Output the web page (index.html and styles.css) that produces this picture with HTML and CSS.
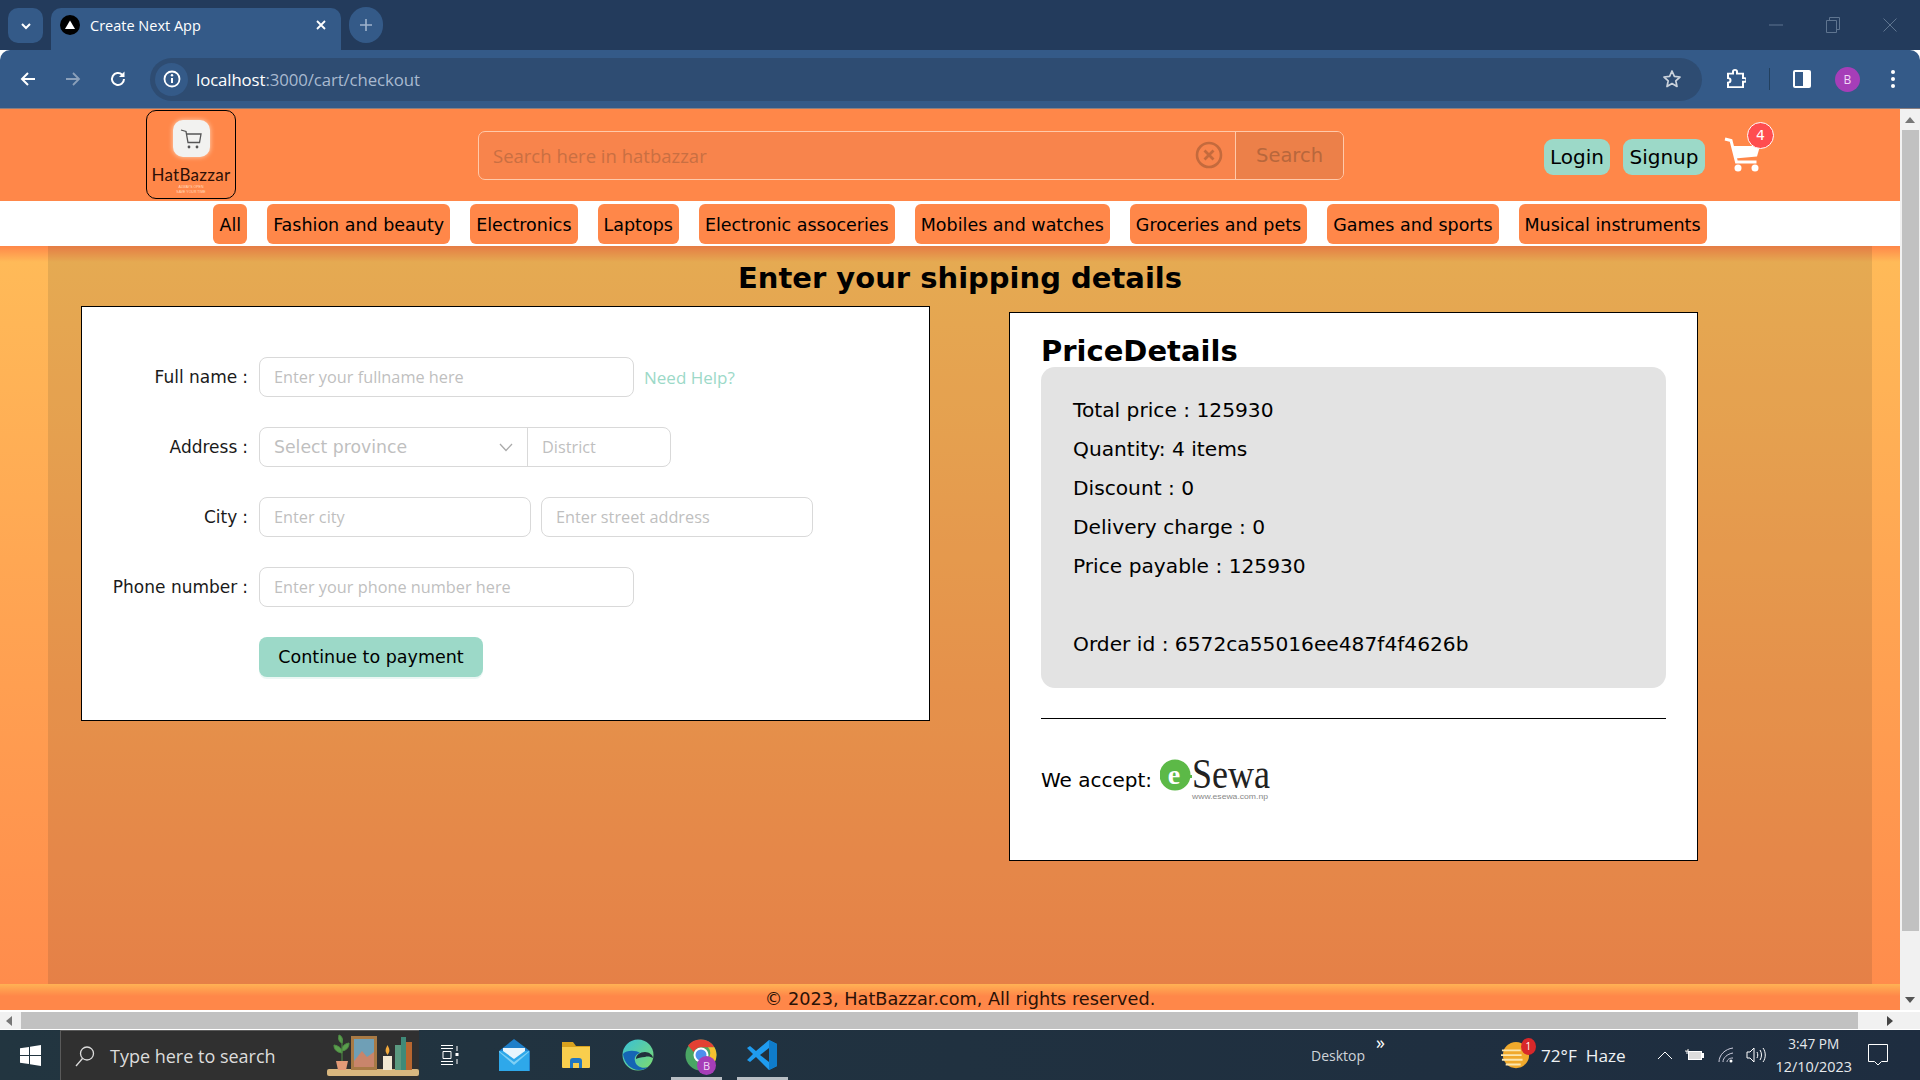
FILE: index.html
```html
<!DOCTYPE html>
<html lang="en">
<head>
<meta charset="utf-8">
<title>Create Next App</title>
<link rel="stylesheet" href="styles.css">
</head>
<body>
<div class="tabstrip">
  <button class="tab-list"><svg width="12" height="12" viewBox="0 0 12 12"><path d="M2 4l4 4 4-4" fill="none" stroke="#fff" stroke-width="2"/></svg></button>
  <div class="tab">
    <svg class="favicon" width="20" height="20" viewBox="0 0 20 20"><circle cx="10" cy="10" r="10" fill="#000"/><path d="M10 5.500l5 8.500H5z" fill="#fff"/></svg>
    <span class="tab-title">Create Next App</span>
    <svg class="tab-close" width="12" height="12" viewBox="0 0 12 12"><path d="M2 2l8 8M10 2l-8 8" stroke="#fff" stroke-width="1.800"/></svg>
  </div>
  <button class="tab-new"><svg width="14" height="14" viewBox="0 0 14 14"><path d="M7 1v12M1 7h12" stroke="#9fb3cc" stroke-width="1.600"/></svg></button>
  <div class="win-controls">
    <svg width="14" height="14" viewBox="0 0 14 14"><path d="M0 7h14" stroke="#5f7590" stroke-width="1"/></svg>
    <svg width="14" height="16" viewBox="0 0 14 16"><path d="M.5 3.500h10v12H.5zM3.500 3.500V.5h10v12h-3" fill="none" stroke="#5f7590"/></svg>
    <svg width="14" height="14" viewBox="0 0 14 14"><path d="M.5.5l13 13M13.500.5l-13 13" stroke="#5f7590"/></svg>
  </div>
</div>
<div class="toolbar">
  <svg class="tb-icon" width="18" height="18" viewBox="0 0 18 18"><path d="M16 9H3M9 3L3 9l6 6" fill="none" stroke="#fff" stroke-width="2"/></svg>
  <svg class="tb-icon fwd" width="18" height="18" viewBox="0 0 18 18"><path d="M2 9h13M9 3l6 6-6 6" fill="none" stroke="#8ba0ba" stroke-width="1.800"/></svg>
  <svg class="tb-icon reload" width="18" height="18" viewBox="0 0 18 18"><path d="M15 9a6 6 0 1 1-1.800-4.300" fill="none" stroke="#fff" stroke-width="2"/><path d="M15.500 1.500v5.500H10z" fill="#fff"/></svg>
  <div class="omnibox">
    <span class="site-info"><svg width="18" height="18" viewBox="0 0 18 18"><circle cx="9" cy="9" r="7.500" fill="none" stroke="#fff" stroke-width="1.800"/><path d="M9 8v5" stroke="#fff" stroke-width="2"/><circle cx="9" cy="5.300" r="1.200" fill="#fff"/></svg></span>
    <span class="url"><b>localhost</b>:3000/cart/checkout</span>
    <svg class="star" width="20" height="20" viewBox="0 0 20 20"><path d="M10 2l2.400 5.400 5.600.6-4.200 3.800 1.200 5.700L10 14.600l-5 2.900 1.200-5.700L2 8l5.600-.6z" fill="none" stroke="#fff" stroke-width="1.700" stroke-linejoin="round"/></svg>
  </div>
  <svg class="ext" width="20" height="20" viewBox="0 0 20 22" preserveAspectRatio="none"><path d="M2 5h5V3a2 2 0 0 1 4 0v2h6v5h1.500a2 2 0 0 1 0 4H17v6H2v-5a2.500 2.500 0 0 0 0-5z" fill="none" stroke="#fff" stroke-width="2"/></svg>
  <span class="tb-sep"></span>
  <svg class="sidepanel" width="18" height="18" viewBox="0 0 18 18"><rect width="18" height="18" rx="2" fill="#fff"/><rect x="2" y="2" width="8" height="14" fill="#345a88"/></svg>
  <span class="avatar">B</span>
  <svg class="menu" width="6" height="18" viewBox="0 0 6 18"><circle cx="3" cy="2" r="2" fill="#fff"/><circle cx="3" cy="9" r="2" fill="#fff"/><circle cx="3" cy="16" r="2" fill="#fff"/></svg>
</div>

<div class="viewport">
  <div class="clip">
    <div class="page">
      <header class="site-header">
        <div class="logo">
          <div class="logo-tile">
            <svg width="24" height="24" viewBox="0 0 24 24"><path d="M2 3l5 1.500 2 11h11.500L22 7H7.500" fill="none" stroke="#555" stroke-width="1.300"/><circle cx="10" cy="20" r="1.400" fill="#555"/><circle cx="18" cy="20" r="1.400" fill="#555"/></svg>
          </div>
          <div class="logo-name">HatBazzar</div>
          <div class="logo-tag">ALWAYS OPEN<br>SAVE YOUR TIME</div>
        </div>
        <div class="search">
          <input class="search-input" type="text" placeholder="Search here in hatbazzar">
          <svg class="search-clear" width="28" height="28" viewBox="0 0 28 28"><circle cx="14" cy="14" r="12" fill="none" stroke="#c46a3d" stroke-width="2.600"/><path d="M9.500 9.500l9 9M18.500 9.500l-9 9" stroke="#c46a3d" stroke-width="2.800"/></svg>
          <span class="search-btn">Search</span>
        </div>
        <a class="auth login">Login</a>
        <a class="auth signup">Signup</a>
        <div class="cart">
          <svg width="38" height="36" viewBox="0 0 38 36"><path d="M1 2l6 1.500L12.500 25h20" fill="none" stroke="#fff" stroke-width="3"/><path d="M8 9h28l-3 10.500-22 2z" fill="#fff"/><circle cx="14" cy="31" r="3.500" fill="#fff"/><circle cx="31" cy="31" r="3.500" fill="#fff"/></svg>
          <span class="cart-badge">4</span>
        </div>
      </header>
      <nav class="catnav">
        <a>All</a><a>Fashion and beauty</a><a>Electronics</a><a>Laptops</a><a>Electronic assoceries</a><a>Mobiles and watches</a><a>Groceries and pets</a><a>Games and sports</a><a>Musical instruments</a>
      </nav>
      <main class="main">
        <div class="main-inner">
          <h1 class="title">Enter your shipping details</h1>
          <div class="columns">
            <form class="form-card">
              <div class="row">
                <label class="lbl">Full name<i>:</i></label>
                <input class="field w375" placeholder="Enter your fullname here">
                <a class="help">Need Help?</a>
              </div>
              <div class="row">
                <label class="lbl">Address<i>:</i></label>
                <div class="combo">
                  <span class="select">Select province<svg width="14" height="9" viewBox="0 0 14 9"><path d="M1 1l6 6.500L13 1" fill="none" stroke="#aaa" stroke-width="1.300"/></svg></span>
                  <input class="field-bare" placeholder="District">
                </div>
              </div>
              <div class="row">
                <label class="lbl">City<i>:</i></label>
                <input class="field w272" placeholder="Enter city">
                <input class="field w272 next" placeholder="Enter street address">
              </div>
              <div class="row">
                <label class="lbl">Phone number<i>:</i></label>
                <input class="field w375" placeholder="Enter your phone number here">
              </div>
              <div class="row">
                <span class="lbl"></span>
                <button type="button" class="continue">Continue to payment</button>
              </div>
            </form>
            <section class="price-card">
              <h2 class="price-title">PriceDetails</h2>
              <div class="price-box">
                <p>Total price : 125930</p>
                <p>Quantity: 4 items</p>
                <p>Discount : 0</p>
                <p>Delivery charge : 0</p>
                <p>Price payable : 125930</p>
                <p class="blank"></p>
                <p>Order id : 6572ca55016ee487f4f4626b</p>
              </div>
              <hr class="divider">
              <div class="accept">
                <span>We accept:</span>
                <svg class="esewa" width="140" height="46" viewBox="0 0 140 46">
                  <circle cx="15" cy="18" r="15.500" fill="#5cb947"/>
                  <text x="14" y="27" class="es-e">e</text>
                  <rect x="25" y="18" width="7" height="3" fill="#5cb947"/>
                  <text x="32" y="31" class="es-sewa" textLength="78" lengthAdjust="spacingAndGlyphs">Sewa</text>
                  <text x="32" y="42" class="es-url" textLength="76" lengthAdjust="spacingAndGlyphs">www.esewa.com.np</text>
                </svg>
              </div>
            </section>
          </div>
        </div>
      </main>
      <footer class="site-footer">© 2023, HatBazzar.com, All rights reserved.</footer>
    </div>
  </div>
  <div class="vscroll">
    <span class="arrow-up"></span>
    <span class="vthumb"></span>
    <span class="arrow-down"></span>
  </div>
</div>
<div class="hscroll">
  <span class="arrow-left"></span>
  <span class="hthumb"></span>
  <span class="arrow-right"></span>
</div>

<div class="taskbar">
  <svg class="win" width="21" height="21" viewBox="0 0 21 21"><path d="M0 3.200l9-1.300v8H0zM10 1.700L21 0v9.900H10zM0 11h9v8.100l-9-1.300zM10 11h11v10l-11-1.700z" fill="#fff"/></svg>
  <div class="tsearch">
    <svg width="20" height="22" viewBox="0 0 20 22"><circle cx="12" cy="8.500" r="6.500" fill="none" stroke="#ddd" stroke-width="1.300"/><path d="M7.500 13.500L1 21" stroke="#ddd" stroke-width="1.300"/></svg>
    <span class="tsearch-text">Type here to search</span>
    <svg class="shelf" width="92" height="46" viewBox="0 0 92 46">
      <rect x="0" y="38" width="92" height="7" rx="2" fill="#d8b77f"/>
      <path d="M9 30h12l-2 9h-8z" fill="#e39a76"/>
      <path d="M15 30V8M15 22c-7-1-8-5-8-8 5 1 8 3 8 8zM15 20c6-1 7-5 7-8-5 1-7 3-7 8zM15 12c-3-1-4-4-3-8 3 1 4 4 3 8z" fill="#5a9e4d" stroke="#4f8f44"/>
      <rect x="24" y="5" width="26" height="34" fill="#a87a45"/>
      <rect x="27" y="8" width="20" height="28" fill="#6f9fb6"/>
      <path d="M27 30l8-10 5 6 7-5v15H27z" fill="#c9856b"/>
      <rect x="56" y="25" width="9" height="14" fill="#f3e8d2"/>
      <path d="M60.500 14c2 4 3 6 0 10-3-4-2-6 0-10z" fill="#f2a93b"/>
      <rect x="68" y="14" width="6" height="25" fill="#5b9a80"/>
      <rect x="74" y="6" width="5" height="33" fill="#3f8a78"/>
      <rect x="79" y="11" width="6" height="28" fill="#b8662f"/>
    </svg>
  </div>
  <svg class="tview" width="20" height="20" viewBox="0 0 20 20"><path d="M1 .5h12M1 3.500h12M3 6.500h8v7H3zM1 16.500h12M1 19.500h12M17 1v5M17 14v5" fill="none" stroke="#fff" stroke-width="1"/><rect x="15.500" y="8" width="3" height="3" fill="#fff"/></svg>
  <svg class="app mail" width="32" height="32" viewBox="0 0 32 32"><path d="M16 0l16 12v20H1V12z" fill="#1f7fc9"/><path d="M1 12h30v20H1z" fill="#2ea8ea"/><path d="M5 9h22v3L16 20 5 12z" fill="#e8f5fd"/><path d="M1 12l15 11 15-11v1L16 26 1 13z" fill="#7fd0f5"/></svg>
  <svg class="app folder" width="30" height="28" viewBox="0 0 30 28"><path d="M1 1h11l3 4h14v5H1z" fill="#d9a21e"/><path d="M1 6h28v20a1 1 0 0 1-1 1H2a1 1 0 0 1-1-1z" fill="#f9ce4d"/><path d="M9 27v-7a3 3 0 0 1 3-3h6a3 3 0 0 1 3 3v7h-3v-5h-6v5z" fill="#2277c2"/></svg>
  <svg class="app edge" width="32" height="32" viewBox="0 0 32 32"><defs><linearGradient id="edgeG" x1="0" y1="0" x2="1" y2="1"><stop offset="0" stop-color="#38c0d8"/><stop offset="1" stop-color="#7fdc6c"/></linearGradient></defs><circle cx="16" cy="16" r="15.500" fill="url(#edgeG)"/><path d="M1 15C2 24 9 31 17 31c4 0 7-1 9-3-5 2-12 0-13-6-1-4 1-7 5-8-4-3-14-3-17 1z" fill="#1565b5"/><path d="M14 20c0-4 4-7 9-7 4 0 8 3 8 6-2-1-5-2-8-1-4 0-7 1-9 2z" fill="#22303c"/></svg>
  <span class="app-wrap chrome">
    <svg width="32" height="32" viewBox="0 0 32 32"><circle cx="16" cy="16" r="15.500" fill="#4aa564"/><path d="M16 .5a15.500 15.500 0 0 1 13.400 7.800H16a8 8 0 0 0-7.300 4.700L3 6.500A15.500 15.500 0 0 1 16 .5z" fill="#e34133"/><path d="M29.400 8.300A15.500 15.500 0 0 1 17 31.500l6-12a8 8 0 0 0 0-11.200z" fill="#f6c02f"/><circle cx="16" cy="16" r="7.500" fill="#fff"/><circle cx="16" cy="16" r="5.500" fill="#4d8fec"/></svg>
    <span class="prof-badge">B</span>
  </span>
  <svg class="app vsc" width="32" height="32" viewBox="0 0 32 32"><path d="M23 1l8 4v22l-8 4-13-13-6 5-3-2 6-6-6-6 3-2 6 5z" fill="#1f9cf0"/><path d="M23 9l-9 7 9 7z" fill="#22303c"/><path d="M23 1l8 4v22l-8 4z" fill="#0f7ccb"/></svg>
  <span class="desk">Desktop</span>
  <span class="chev">»</span>
  <span class="weather-ic">
    <svg width="32" height="32" viewBox="0 0 32 32"><circle cx="16" cy="15" r="14" fill="#f0a92c"/><path d="M1 10h20M0 15h22M1 20h22M5 25h16" stroke="#fbe6ad" stroke-width="2"/></svg>
    <span class="w-badge">1</span>
  </span>
  <span class="weather">72°F&nbsp; Haze</span>
  <svg class="tray caret" width="16" height="9" viewBox="0 0 16 9"><path d="M1 8l7-7 7 7" fill="none" stroke="#fff" stroke-width="1"/></svg>
  <svg class="tray batt" width="20" height="14" viewBox="0 0 20 14"><path d="M0 3h3V1M2 3v3" stroke="#fff"/><rect x="3.500" y="3.500" width="13" height="8" fill="#ddd" stroke="#fff"/><rect x="17" y="5" width="2" height="5" fill="#fff"/></svg>
  <svg class="tray wifi" width="16" height="16" viewBox="0 0 16 16"><path d="M1 15C1 8 7 2 15 1M5 15c0-4 4-8 10-9M9 15c0-2 2-4 6-4" fill="none" stroke="#ccd" stroke-width="1"/><circle cx="13" cy="14" r="1.500" fill="#fff"/></svg>
  <svg class="tray vol" width="20" height="18" viewBox="0 0 20 18"><path d="M1 6h3l4-4v14l-4-4H1zM11 6c1 2 1 4 0 6M14 4c2 3 2 7 0 10M17 2c3 4 3 10 0 14" fill="none" stroke="#fff" stroke-width="1"/></svg>
  <div class="clock"><span class="time">3:47 PM</span><span class="date">12/10/2023</span></div>
  <svg class="notif" width="20" height="22" viewBox="0 0 20 22"><path d="M.5.500h19v17h-6l-3.500 3.500-3.500-3.500h-6z" fill="none" stroke="#fff" stroke-width="1"/></svg>
</div>
</body>
</html>
```
FILE: styles.css
```css
* { box-sizing: border-box; }
html, body { margin: 0; height: 100%; overflow: hidden; }
body { width: 1920px; height: 1080px; background: #fff; font-family: "DejaVu Sans", sans-serif; color: #000; }

/* browser chrome */
.tabstrip { height: 50px; background: #233b5c; display: flex; align-items: flex-end; padding-left: 8px; position: relative; }
.tab-list { width: 35px; height: 35px; margin-bottom: 7px; border: 0; border-radius: 10px; background: #345a88; display: flex; align-items: center; justify-content: center; padding: 0; }
.tab { width: 290px; height: 42px; margin-left: 8px; background: #345a88; border-radius: 10px 10px 0 0; display: flex; align-items: center; padding: 0 14px 8px 9px; color: #fff; font: 14.500px "Open Sans", sans-serif; }
.favicon { margin-right: 10px; }
.tab-title { flex: 1; }
.tab-new { width: 34px; height: 36px; margin: 0 0 7px 8px; border: 0; border-radius: 17px; background: #345a88; display: flex; align-items: center; justify-content: center; padding: 0; }
.win-controls { margin-left: auto; align-self: flex-start; display: flex; gap: 43px; padding: 17px 23px 0 0; align-items: center; }
.toolbar { height: 59px; background: #345a88; border-radius: 10px 10px 0 0; border-bottom: 1px solid #8a7f80; display: flex; align-items: center; padding-left: 19px; }
.tb-icon { flex: none; }
.fwd { margin-left: 27px; }
.reload { margin-left: 27px; }
.omnibox { width: 1552px; height: 43px; margin-left: 23px; border-radius: 22px; background: #2e4c72; display: flex; align-items: center; padding-left: 5px; }
.site-info { width: 33px; height: 33px; border-radius: 50%; background: #345a88; display: flex; align-items: center; justify-content: center; }
.url { margin-left: 8px; font: 16.800px "Open Sans", sans-serif; color: #a9bad0; letter-spacing: -.1px; }
.url b { font-weight: 400; color: #fff; }
.star { margin-left: auto; margin-right: 20px; opacity: .75; }
.ext { margin-left: 24px; }
.tb-sep { width: 1px; height: 22px; background: #22405f; margin-left: 23px; }
.sidepanel { margin-left: 23px; }
.avatar { width: 25px; height: 25px; border-radius: 50%; background: #a63eb8; color: #f2d9f6; font: 12px "Open Sans", sans-serif; display: flex; align-items: center; justify-content: center; margin-left: 24px; }
.menu { margin-left: 30px; }

/* viewport */
.viewport { height: 901px; display: flex; }
.clip { width: 1900px; overflow: hidden; }
.page { width: 1920px; height: 901px; display: flex; flex-direction: column; }
.vscroll { width: 20px; background: #f1f1f1; display: flex; flex-direction: column; align-items: center; }
.arrow-up { margin-top: 8px; border: 5px solid transparent; border-top: 0; border-bottom: 6px solid #777; }
.vthumb { width: 17px; height: 801px; margin-top: 7px; background: #c1c1c1; }
.arrow-down { margin-top: auto; margin-bottom: 7px; border: 5px solid transparent; border-bottom: 0; border-top: 6px solid #555; }
.hscroll { height: 18px; margin-top: 2px; background: #f1f1f1; display: flex; align-items: center; border-bottom: 1px solid #fff; }
.arrow-left { margin-left: 6px; border: 5px solid transparent; border-left: 0; border-right: 6px solid #777; }
.hthumb { width: 1837px; height: 17px; margin-left: 9px; background: #c1c1c1; }
.arrow-right { margin-left: 29px; border: 5px solid transparent; border-right: 0; border-left: 6px solid #444; }

/* site header */
.site-header { height: 92px; background: #ff8749; display: flex; align-items: center; padding-left: 146px; flex: none; }
.logo { width: 90px; height: 89px; align-self: flex-start; margin-top: 1px; border: 1px solid #000; border-radius: 10px; display: flex; flex-direction: column; align-items: center; position: relative; z-index: 1; }
.logo-tile { width: 37px; height: 37px; margin-top: 9px; border-radius: 10px; background: #f2f2f0; box-shadow: 0 0 5px #ffd8bd; display: flex; align-items: center; justify-content: center; }
.logo-name { font: 400 17px/18px Lato, sans-serif; color: #2e1006; margin-top: 9px; letter-spacing: .3px; }
.logo-tag { font: 3.500px/4.500px "Liberation Sans", sans-serif; color: #ffd9bd; text-align: center; margin-top: 1px; }
.search { width: 866px; height: 49px; margin-left: 242px; border: 1px solid #ffc9aa; border-radius: 7px; background: #f8844c; display: flex; align-items: center; overflow: hidden; }
.search-input { flex: 1; min-width: 0; height: 100%; border: 0; outline: 0; background: transparent; padding: 0 14px; font: 18.500px "Open Sans", sans-serif; }
.search-input::placeholder { color: #c96f42; opacity: 1; }
.search-clear { margin-right: 12px; }
.search-btn { width: 108px; height: 100%; border-left: 1px solid #ffc9aa; background: #ec8049; color: #b8673c; font-size: 19.500px; display: flex; align-items: center; justify-content: center; }
.auth { height: 36px; margin-top: 3px; border-radius: 9px; background: #9cd9c8; display: flex; align-items: center; justify-content: center; font-size: 20px; }
.login { width: 66px; margin-left: 200px; }
.signup { width: 82px; margin-left: 13px; }
.cart { position: relative; margin-left: 19px; margin-top: -1px; height: 36px; }
.cart-badge { position: absolute; left: 23px; top: -15px; width: 27px; height: 27px; border-radius: 50%; background: #ff4d4f; border: 1px solid #fff; color: #fff; font-size: 14px; display: flex; align-items: center; justify-content: center; }

/* category nav */
.catnav { height: 45px; background: #fff; display: flex; justify-content: center; gap: 20px; padding-top: 3px; flex: none; }
.catnav a { height: 40px; padding: 1px 6px 0; border-radius: 6px; background: #ff8749; display: flex; align-items: center; font-size: 17.500px; white-space: nowrap; }

/* main */
.main { height: 738px; flex: none; padding: 0 48px; background: linear-gradient(#ff8749 0, #ffba58 16px, #ff8c4c 100%); }
.main-inner { height: 100%; background: rgba(0, 30, 30, .1); }
.title { margin: 0; padding-top: 13px; height: 60px; text-align: center; font-size: 29px; line-height: 38px; font-weight: 700; }
.columns { display: flex; align-items: flex-start; padding-left: 33px; gap: 79px; }
.form-card { width: 849px; height: 415px; background: #fff; border: 1px solid #000; padding-top: 50px; }
.row { display: flex; align-items: center; height: 40px; margin-bottom: 30px; }
.lbl { width: 166px; text-align: right; font-size: 17px; color: #1a1a1a; white-space: nowrap; }
.lbl i { font-style: normal; margin-left: 5px; }
.field { height: 40px; margin-left: 11px; border: 1px solid #d9d9d9; border-radius: 8px; padding: 0 14px; font: 16.300px "Open Sans", sans-serif; outline: 0; background: #fff; }
.field::placeholder, .field-bare::placeholder { color: #bfbfbf; opacity: 1; }
.w375 { width: 375px; }
.w272 { width: 272px; }
.field.next { margin-left: 10px; }
.help { margin-left: 10px; font: 17px "Open Sans", sans-serif; color: #9cd9c8; }
.combo { width: 412px; height: 40px; margin-left: 11px; border: 1px solid #d9d9d9; border-radius: 8px; display: flex; }
.select { width: 268px; border-right: 1px solid #d9d9d9; display: flex; align-items: center; justify-content: space-between; padding: 0 14px; font-size: 17.300px; color: #bfbfbf; }
.field-bare { flex: 1; min-width: 0; border: 0; outline: 0; background: transparent; padding: 0 14px; font: 16.300px "Open Sans", sans-serif; border-radius: 0 8px 8px 0; }
.continue { width: 224px; height: 40px; margin-left: 11px; border: 0; border-radius: 8px; background: #9cd9c8; box-shadow: 0 2px 0 rgba(156, 217, 200, .2); font: 17.500px "DejaVu Sans", sans-serif; color: #000; padding: 0; }
.price-card { width: 689px; height: 549px; margin-top: 6px; background: #fff; border: 1px solid #000; padding: 0 31px; }
.price-title { margin: 0; height: 54px; padding-top: 18px; font-size: 29px; line-height: 40px; font-weight: 700; white-space: nowrap; }
.price-box { height: 321px; padding: 24px 32px; border-radius: 14px; background: #e3e3e3; font-size: 20.200px; line-height: 39px; }
.price-box p { margin: 0; height: 39px; white-space: nowrap; }
.divider { margin: 30px 0 0; border: 0; height: 1px; background: #000; }
.accept { display: flex; align-items: flex-start; margin-top: 38px; font-size: 20px; line-height: 46px; }
.esewa { margin-left: 8px; flex: none; }
.es-e { font: 700 28px "Liberation Serif", serif; fill: #fff; text-anchor: middle; }
.es-sewa { font: 42px "Liberation Serif", serif; fill: #222; }
.es-url { font: 8px "Liberation Sans", sans-serif; fill: #888; }

.site-footer { height: 26px; flex: none; background: linear-gradient(#ffb254 0, #ff8749 12px); text-align: center; font-size: 17.700px; line-height: 30px; color: #2a1206; white-space: nowrap; overflow: hidden; }

/* taskbar */
.taskbar { height: 50px; background: linear-gradient(90deg, #223540, #1e2d40); display: flex; align-items: center; color: #fff; font-family: "Open Sans", sans-serif; position: relative; }
.win { margin-left: 20px; }
.tsearch { width: 359px; height: 50px; margin-left: 19px; background: #303030; border: 1px solid #5a5a5a; border-width: 1px 0 0 1px; display: flex; align-items: center; padding-left: 14px; overflow: hidden; position: relative; }
.tsearch-text { margin-left: 15px; font-size: 18px; color: #dcdcdc; }
.shelf { position: absolute; right: 0; bottom: 3px; }
.tview { margin-left: 21px; flex: none; }
.app { flex: none; }
.mail { margin-left: 38px; }
.folder { margin-left: 31px; }
.edge { margin-left: 31px; }
.app-wrap { position: relative; display: flex; margin-left: 31px; height: 50px; width: 32px; align-items: center; }
.app-wrap::after { content: ""; position: absolute; left: -14px; right: -5px; bottom: 0; height: 3px; background: #b8bec4; }
.prof-badge { position: absolute; left: 12px; top: 26px; width: 19px; height: 19px; border-radius: 50%; background: #a63eb8; color: #f2d9f6; font-size: 11px; line-height: 19px; text-align: center; }
.vsc { margin-left: 29px; }
.taskbar::after { content: ""; position: absolute; left: 737px; width: 51px; bottom: 0; height: 3px; background: #b8bec4; }
.desk { margin-left: 533px; font-size: 14px; color: #cfd4d9; }
.chev { margin: -27px 0 0 11px; font-size: 18px; color: #fff; }
.weather-ic { position: relative; margin-left: 116px; width: 30px; height: 30px; display: flex; }
.w-badge { position: absolute; right: -5px; top: -2px; width: 15px; height: 17px; border-radius: 50%; background: #d8282a; color: #fff; font-size: 10px; line-height: 17px; text-align: center; }
.weather { margin-left: 10px; font-size: 17.200px; color: #eef1f4; white-space: nowrap; }
.tray { flex: none; }
.caret { margin-left: 31px; }
.batt { margin-left: 12px; }
.wifi { margin-left: 13px; }
.vol { margin-left: 12px; }
.clock { width: 90px; margin-left: 3px; display: flex; flex-direction: column; align-items: center; line-height: 23px; color: #e6e9ec; }
.time { font-size: 13.600px; }
.date { font-size: 14.400px; }
.notif { margin-left: 9px; }
```
